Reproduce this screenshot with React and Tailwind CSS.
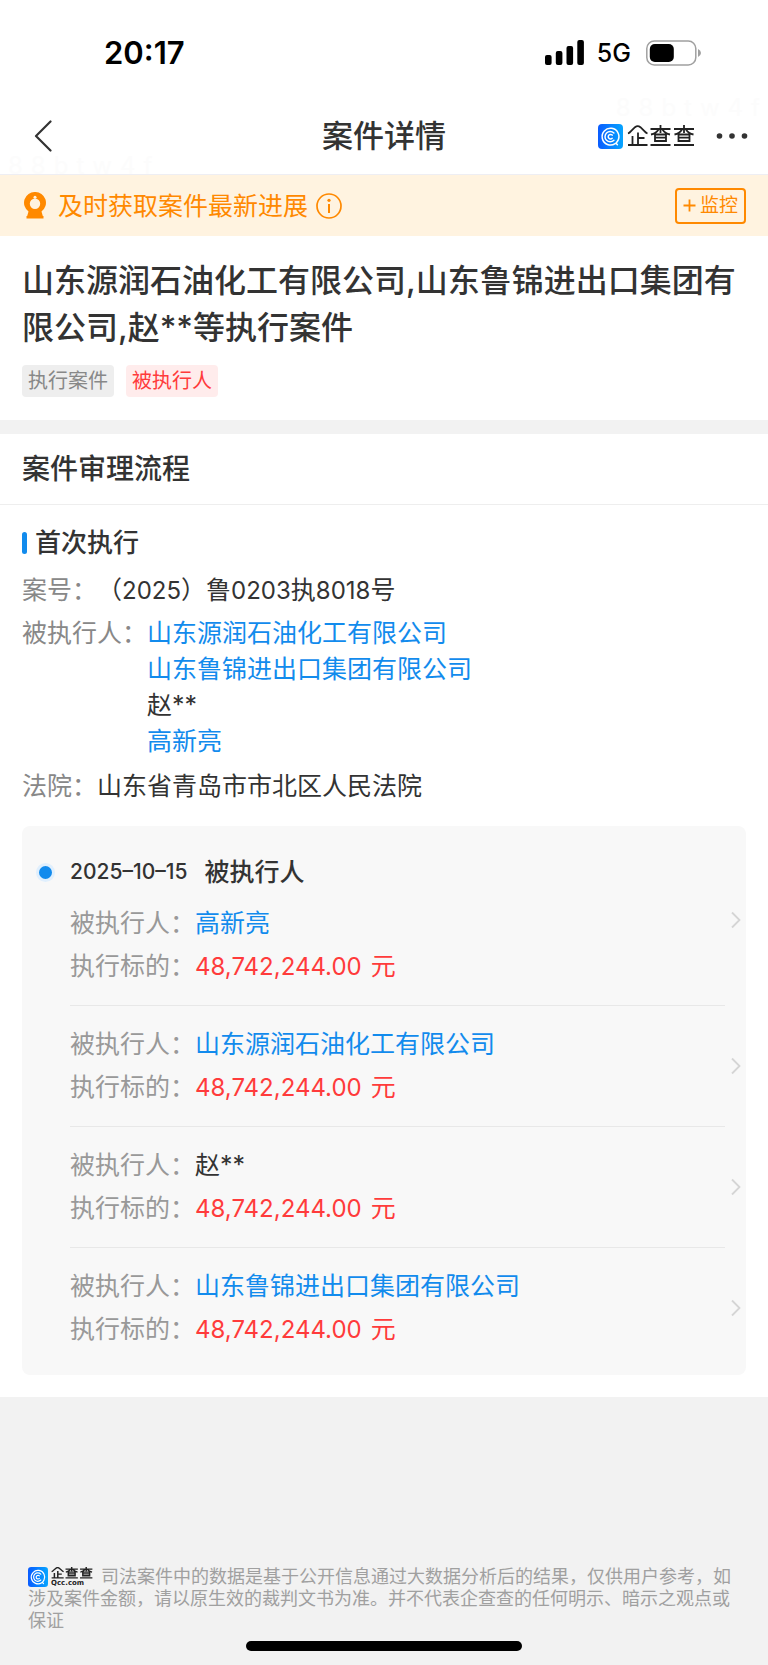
const DEFENDANTS = [
  { name: '山东源润石油化工有限公司', link: true },
  { name: '山东鲁锦进出口集团有限公司', link: true },
  { name: '赵**', link: false },
  { name: '高新亮', link: true },
];

const RECORDS = [
  { name: '高新亮', link: true, amount: '48,742,244.00' },
  { name: '山东源润石油化工有限公司', link: true, amount: '48,742,244.00' },
  { name: '赵**', link: false, amount: '48,742,244.00' },
  { name: '山东鲁锦进出口集团有限公司', link: true, amount: '48,742,244.00' },
];

function LogoMark({ className, id }) {
  return (
    <svg viewBox="0 0 25 25" className={className} fill="none" aria-hidden="true">
      <defs>
        <linearGradient id={id} x1="0" y1="0" x2="1" y2="0">
          <stop offset="0" stopColor="#0a5cff" />
          <stop offset="1" stopColor="#06a5ff" />
        </linearGradient>
      </defs>
      <rect width="25" height="25" rx="4" fill={`url(#${id})`} />
      <g stroke="#fff" strokeWidth="1.5" strokeLinecap="round">
        <path d="M17.2 19.6A8.4 8.4 0 1 1 19.8 16.8L18 19.2L19.4 20.8" strokeLinejoin="round" />
        <path d="M15.9 16.3A5.2 5.2 0 1 1 15.9 9" />
        <path d="M14.2 14.3A2.3 2.3 0 1 1 14.2 11.1" />
      </g>
    </svg>
  );
}

function Wordmark({ className, strokeWidth = 1.8 }) {
  const cha =
    'M23.5 4H43.5M33.5 0V8M24 9.5Q29 8.5 31.5 4.5M43 9.5Q38 8.5 35.5 4.5M28 9.5H39V16H28ZM28 12.7H39M23.5 20H43.5';
  return (
    <svg viewBox="0 0 68 22" preserveAspectRatio="none" className={className} fill="none" stroke="#222" strokeWidth={strokeWidth} role="img" aria-label="企查查">
      <path d="M1 8.5Q2.5 8 4 6.2L8 2.2Q10.7 0 13.4 2.2L17.4 6.2Q19 8 20.5 8.5M11 7.5V20M11 13H17.5M5.5 11V20M1 20H20.5" />
      <path d={cha} />
      <path d={cha} transform="translate(23.5 0)" />
    </svg>
  );
}

function Name({ name, link }) {
  return link ? (
    <a href="#company" className="text-[#128bed]">{name}</a>
  ) : (
    <span className="text-[#333]">{name}</span>
  );
}

// Digits are set one pixel smaller than the Chinese characters beside them.
function Digits({ children }) {
  return <span className="text-[24px]">{children}</span>;
}

function Watermark({ className }) {
  return (
    <div aria-hidden="true" className={`pointer-events-none absolute flex gap-2 text-2xl text-[#fcfcfc] ${className}`}>
      {'88btw4f'.split('').map((c, i) => (
        <span key={i}>{c}</span>
      ))}
    </div>
  );
}

export default function App() {
  return (
    <div className="flex min-h-screen flex-col bg-[#f2f2f2] font-['Inter','Noto_Sans_CJK_SC',sans-serif] text-[25px] leading-9 text-[#333]">
      <header className="relative border-b border-[#eeeef3] bg-white pb-px">
        <Watermark className="bottom-[-8px] left-2" />
        <Watermark className="right-2 bottom-[50px]" />
        <div className="flex h-[99px] items-center justify-between pt-[6px] pr-[66px] pl-[104px] text-black">
          <span className="text-[31px] font-semibold">20:17</span>
          <div className="flex items-center">
            <svg viewBox="0 0 40 25" className="h-[25px] w-10" aria-hidden="true">
              <rect x="0" y="15" width="6.6" height="10" rx="2" />
              <rect x="10.8" y="11" width="6.6" height="14" rx="2" />
              <rect x="21.5" y="6" width="6.6" height="19" rx="2" />
              <rect x="32.3" y="0" width="6.6" height="25" rx="2" />
            </svg>
            <span className="ml-3 text-[25px] font-medium">5G</span>
            <svg viewBox="0 0 57 26" className="ml-[14px] h-[26px] w-[57px]" aria-hidden="true">
              <rect x="1.8" y="1" width="49" height="24" rx="7.5" fill="none" stroke="#a0a0a0" strokeWidth="1.5" />
              <rect x="4.8" y="4" width="24" height="18" rx="5" />
              <path d="M53 9Q56 10.5 56 13Q56 15.5 53 17Z" fill="#a0a0a0" />
            </svg>
          </div>
        </div>
        <div className="relative grid h-[74px] grid-cols-[1fr_auto_1fr] items-center px-5">
          <button type="button" aria-label="返回" className="ml-[14px] justify-self-start">
            <svg viewBox="0 0 18 32" className="h-8 w-[18px]" fill="none" stroke="#333" strokeWidth="2.2" strokeLinecap="round" strokeLinejoin="round">
              <path d="M16.5 1.5L2 16L16.5 30.5" />
            </svg>
          </button>
          <h1 className="text-[31px] font-medium">案件详情</h1>
          <div className="flex items-center justify-self-end">
            <LogoMark id="mark-nav" className="h-[25px] w-[25px]" />
            <Wordmark className="ml-1 h-[22px] w-[68px]" />
            <button type="button" aria-label="更多" className="ml-[21px]">
              <svg viewBox="0 0 32 6" className="h-[6px] w-8" fill="#333">
                <circle cx="3.5" cy="3" r="2.8" />
                <circle cx="16" cy="3" r="2.8" />
                <circle cx="28.5" cy="3" r="2.8" />
              </svg>
            </button>
          </div>
        </div>
      </header>

      <div className="relative flex h-[61px] items-center justify-between bg-[#fff3e0] pr-[22px] pl-6 text-[#ff8900]">
        <div className="flex items-center">
          <svg viewBox="0 0 22 27" className="h-[27px] w-[22px]" aria-hidden="true">
            <path fill="#ff8900" fillRule="evenodd" d="M11 0A10.7 10.7 0 0 1 17.5 19.4L18.8 24H19.5V26.5H2.5V24H3.2L4.5 19.4A10.7 10.7 0 0 1 11 0ZM11 6.5A5.2 5.2 0 1 0 11 16.9A5.2 5.2 0 1 0 11 6.5Z" />
            <circle cx="11" cy="5.3" r="1.5" fill="#fff3e0" />
          </svg>
          <span className="ml-3">及时获取案件最新进展</span>
          <svg viewBox="0 0 26 26" className="ml-2 h-[26px] w-[26px]" fill="none" stroke="#ff8900" strokeWidth="1.7" aria-hidden="true">
            <circle cx="13" cy="13" r="12" />
            <path d="M13 11V20" strokeWidth="2" />
            <circle cx="13" cy="7.3" r="1.6" fill="#ff8900" stroke="none" />
          </svg>
        </div>
        <button type="button" className="flex h-9 items-center gap-1 rounded border-2 border-[#ff8900] px-[6px] text-[19px]">
          <svg viewBox="0 0 13 13" className="h-[13px] w-[13px]" stroke="#ff8900" strokeWidth="1.8" aria-hidden="true">
            <path d="M0.5 6.5H12.5M6.5 0.5V12.5" />
          </svg>
          监控
        </button>
      </div>

      <section className="bg-white px-[22px] pt-[21px] pb-[23px]">
        <h2 className="text-[32px] leading-[47px] font-medium">山东源润石油化工有限公司,山东鲁锦进出口集团有限公司,赵**等执行案件</h2>
        <div className="mt-[14px] flex gap-3 text-[20px] leading-8">
          <span className="rounded-sm bg-[#eee] px-[6px] text-[#888]">执行案件</span>
          <span className="rounded-sm bg-[#ffecec] px-[6px] text-[#ff3b3b]">被执行人</span>
        </div>
      </section>

      <section className="mt-[14px] bg-white pb-[22px]">
        <h2 className="border-b border-[#eee] px-[22px] py-[17px] text-[28px] font-medium">案件审理流程</h2>
        <div className="px-[22px] pt-5">
          <h3 className="flex items-center gap-2 text-[26px] font-medium">
            <span className="h-[22px] w-[5px] rounded-full bg-[#128bed]" />
            首次执行
          </h3>
          <dl className="mt-[11px] flex flex-col gap-[7px] text-[#888]">
            <div className="flex h-9">
              <dt>案号：</dt>
              <dd className="text-[#333]">
                （<Digits>2025</Digits>）鲁<Digits>0203</Digits>执<Digits>8018</Digits>号
              </dd>
            </div>
            <div className="flex">
              <dt>被执行人：</dt>
              <dd>
                <ul>
                  {DEFENDANTS.map((d) => (
                    <li key={d.name} className="h-9"><Name {...d} /></li>
                  ))}
                </ul>
              </dd>
            </div>
            <div className="mt-[2px] flex h-9">
              <dt>法院：</dt>
              <dd className="text-[#333]">山东省青岛市市北区人民法院</dd>
            </div>
          </dl>

          <div className="mt-[22px] rounded-lg bg-[#f8f8f8] pt-2 pr-[21px] pb-[7px] pl-12">
            {RECORDS.map((r, i) => (
              <article key={r.name} className="relative border-b border-[#e8e8e8] pt-5 pb-[21px] last:border-b-0">
                {i === 0 && (
                  <h4 className="relative mb-[15px] flex h-9 items-center gap-[17px] font-medium">
                    <span className="absolute -left-[34px] h-[19px] w-[19px] rounded-full border-[3px] border-[#e0effd] bg-[#128bed]" />
                    <time dateTime="2025-10-15" className="text-[21px]">2025–10–15</time>
                    被执行人
                  </h4>
                )}
                <dl className="flex flex-col gap-[7px] text-[#999]">
                  <div className="flex h-9">
                    <dt>被执行人：</dt>
                    <dd><Name {...r} /></dd>
                  </div>
                  <div className="flex h-9">
                    <dt>执行标的：</dt>
                    <dd className="flex items-baseline gap-[9px] text-[#ff3b3b]">
                      <Digits>{r.amount}</Digits>
                      <span>元</span>
                    </dd>
                  </div>
                </dl>
                <svg viewBox="0 0 10 17" className="absolute top-1/2 -right-4 h-[17px] w-[10px] -translate-y-1/2" fill="none" stroke="#d5d5d5" strokeWidth="1.8" aria-hidden="true">
                  <path d="M1 1L8.5 8.5L1 16" />
                </svg>
              </article>
            ))}
          </div>
        </div>
      </section>

      <footer className="mt-auto px-7 pb-[14px]">
        <p className="text-[18px] leading-[22px] text-[#a0a0a0]">
          <span className="mr-2 inline-flex h-[22px] items-center gap-[3px] align-top">
            <LogoMark id="mark-footer" className="h-5 w-5" />
            <span className="flex flex-col text-[#222]">
              <Wordmark className="h-3 w-[42px]" strokeWidth={2.4} />
              <span className="pt-px font-['DejaVu_Sans',sans-serif] text-[7px] leading-[7px] font-bold">Qcc.com</span>
            </span>
          </span>
          司法案件中的数据是基于公开信息通过大数据分析后的结果，仅供用户参考，如涉及案件金额，请以原生效的裁判文书为准。并不代表企查查的任何明示、暗示之观点或保证
        </p>
        <div className="mx-auto mt-[9px] h-[10px] w-[276px] rounded-full bg-black" />
      </footer>
    </div>
  );
}
